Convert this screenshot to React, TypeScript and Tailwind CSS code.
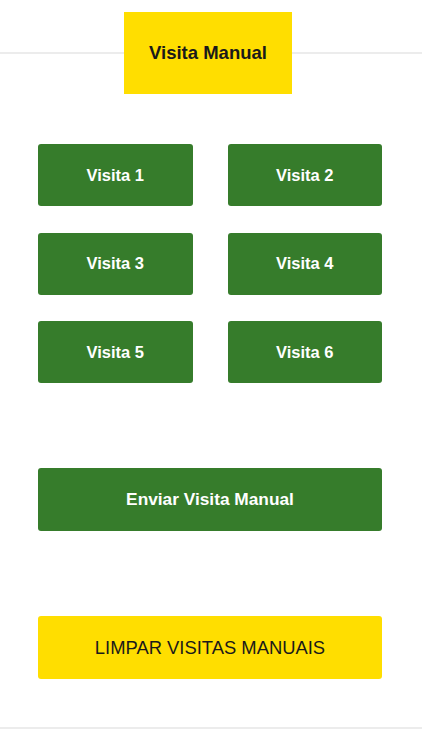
import React from "react";

const VISITAS = ["Visita 1", "Visita 2", "Visita 3", "Visita 4", "Visita 5", "Visita 6"];

export default function App() {
  return (
    <div className="w-[422px] h-[750px] bg-white font-['Liberation_Sans',Arial,sans-serif] flex flex-col">
      {/* cabeçalho com aba */}
      <div className="flex items-center mt-3">
        <div className="w-[124px] h-[2px] bg-[#ececec]" />
        <div className="w-[168px] h-[82px] bg-[#ffde00] flex items-center justify-center text-[18.5px] font-bold text-[#1a1a1a]">
          Visita Manual
        </div>
        <div className="flex-1 h-[2px] bg-[#ececec]" />
      </div>

      <div className="pl-[38px] w-[382px] flex flex-col">
        {/* grade de visitas */}
        <div className="grid grid-cols-2 gap-x-[35px] gap-y-[26.5px] mt-[50px]">
          {VISITAS.map((v) => (
            <button
              key={v}
              className="h-[62px] rounded-[3px] bg-[#367c2b] text-white text-[16.5px] font-bold flex items-center justify-center"
            >
              {v}
            </button>
          ))}
        </div>

        <button className="mt-[85px] h-[63px] rounded-[3px] bg-[#367c2b] text-white text-[17.3px] font-bold flex items-center justify-center">
          Enviar Visita Manual
        </button>

        <button className="mt-[85px] h-[63px] rounded-[3px] bg-[#ffde00] text-[#1a1a1a] text-[18.4px] flex items-center justify-center">
          LIMPAR VISITAS MANUAIS
        </button>
      </div>

      <div className="mt-[48px] h-[2px] bg-[#ececec]" />
    </div>
  );
}
